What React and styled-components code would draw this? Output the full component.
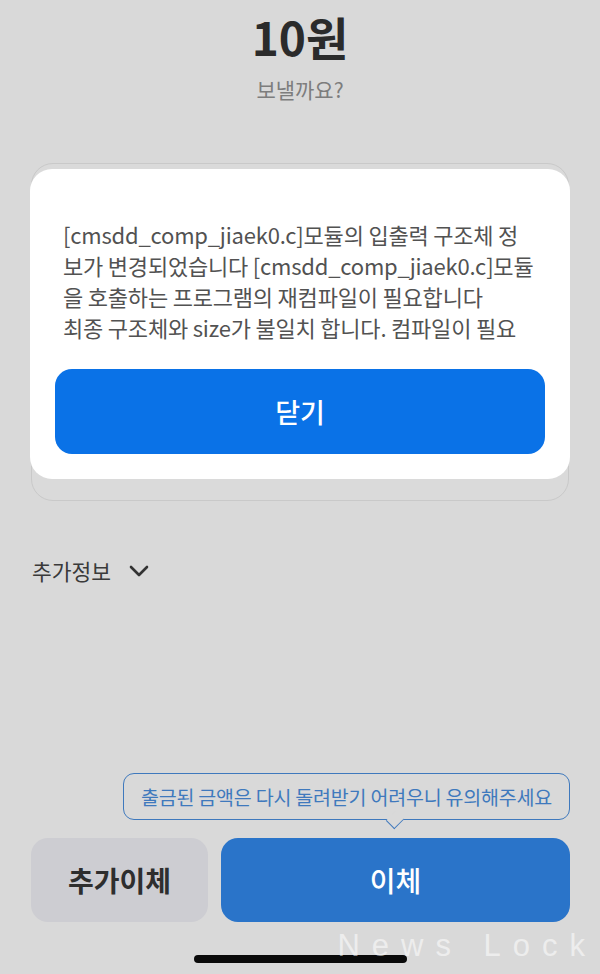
import React from 'react';
import styled, { createGlobalStyle } from 'styled-components';

const GlobalStyle = createGlobalStyle`
  html, body {
    margin: 0;
    padding: 0;
    background: #d9d9d9;
  }
  * { box-sizing: border-box; }
`;

const KR = `"Noto Sans CJK KR", "Noto Sans", sans-serif`;

const Screen = styled.div`
  position: relative;
  height: 974px;
  width: 600px;
  display: flex;
  flex-direction: column;
  padding: 0 30px;
  font-family: ${KR};
  overflow: hidden;
`;

const Header = styled.div`
  display: flex;
  flex-direction: column;
  align-items: center;
  padding-top: 8px;
`;

const Amount = styled.div`
  font-size: 46px;
  font-weight: 700;
  color: #2b2b2b;
  line-height: 56px;
  letter-spacing: 0;
`;

const Question = styled.div`
  margin-top: 10px;
  font-size: 21px;
  color: #7d7d7d;
  line-height: 30px;
`;

const BehindCard = styled.div`
  margin: 59px 1px 0 1px;
  height: 338px;
  border: 1px solid #c9c9c9;
  border-radius: 22px;
  background: #dadada;
`;

const InfoRow = styled.div`
  margin-top: 55px;
  display: flex;
  align-items: center;
  gap: 18px;
  padding-left: 2px;
  font-size: 21.5px;
  color: #3a3a3a;
  line-height: 30px;
`;

const Bottom = styled.div`
  margin-top: auto;
  display: flex;
  flex-direction: column;
`;

const Tooltip = styled.div`
  position: relative;
  align-self: flex-end;
  width: 447px;
  height: 47px;
  border: 1.5px solid #3f79bd;
  border-radius: 11px;
  display: flex;
  align-items: center;
  justify-content: center;
  font-size: 19.5px;
  color: #3f79bd;
  letter-spacing: -0.2px;

  &::after {
    content: '';
    position: absolute;
    left: 264px;
    bottom: -8px;
    width: 13px;
    height: 13px;
    background: #d9d9d9;
    border-right: 1.5px solid #3f79bd;
    border-bottom: 1.5px solid #3f79bd;
    transform: rotate(45deg) scaleX(0.85);
  }
`;

const ButtonRow = styled.div`
  margin-top: 18px;
  display: flex;
  gap: 13px;
  height: 84px;
  padding-left: 1px;
`;

const ActionButton = styled.button`
  flex: ${p => (p.$primary ? '1' : '0 0 177px')};
  border: none;
  border-radius: 17px;
  background: ${p => (p.$primary ? '#2a74c9' : '#cdcdd2')};
  color: ${p => (p.$primary ? '#ffffff' : '#2e2e2e')};
  font-family: ${KR};
  font-size: 28px;
  font-weight: ${p => (p.$primary ? 500 : 700)};
`;

const HomeArea = styled.div`
  height: 52px;
  display: flex;
  justify-content: center;
  padding-top: 33px;
`;

const HomeBar = styled.div`
  width: 213px;
  height: 8px;
  border-radius: 4px;
  background: #0a0a0a;
`;

const Watermark = styled.div`
  position: absolute;
  right: 3px;
  bottom: 10px;
  font-family: "Liberation Sans", Arial, sans-serif;
  font-size: 31px;
  letter-spacing: 12px;
  color: rgba(255, 255, 255, 0.55);
  white-space: nowrap;
`;

const Modal = styled.div`
  position: absolute;
  top: 169px;
  left: 30px;
  width: 540px;
  height: 310px;
  background: #ffffff;
  border-radius: 22px;
  padding: 50px 25px 0 25px;
  display: flex;
  flex-direction: column;
`;

const Message = styled.div`
  padding-left: 8px;
  font-size: 22px;
  line-height: 31px;
  color: #525252;
  letter-spacing: -0.2px;
`;

const Line = styled.div`
  white-space: nowrap;
`;

const CloseButton = styled.button`
  margin-top: 26px;
  height: 85px;
  border: none;
  border-radius: 17px;
  background: #0a72e7;
  color: #ffffff;
  font-family: ${KR};
  font-size: 27px;
  font-weight: 500;
`;

const Chevron = () => (
  <svg width="20" height="14" viewBox="0 0 20 14">
    <polyline points="2,3 10,11 18,3" fill="none" stroke="#333" strokeWidth="2.6" strokeLinecap="round" strokeLinejoin="round" />
  </svg>
);

const lines = [
  '[cmsdd_comp_jiaek0.c]모듈의 입출력 구조체 정',
  '보가 변경되었습니다 [cmsdd_comp_jiaek0.c]모듈',
  '을 호출하는 프로그램의 재컴파일이 필요합니다',
  '최종 구조체와 size가 불일치 합니다. 컴파일이 필요',
];

export default function App() {
  return (
    <>
      <GlobalStyle />
      <Screen>
        <Header>
          <Amount>10원</Amount>
          <Question>보낼까요?</Question>
        </Header>
        <BehindCard />
        <InfoRow>
          추가정보
          <Chevron />
        </InfoRow>
        <Bottom>
          <Tooltip>출금된 금액은 다시 돌려받기 어려우니 유의해주세요</Tooltip>
          <ButtonRow>
            <ActionButton>추가이체</ActionButton>
            <ActionButton $primary>이체</ActionButton>
          </ButtonRow>
          <HomeArea>
            <HomeBar />
          </HomeArea>
        </Bottom>
        <Watermark>News Lock</Watermark>
        <Modal>
          <Message>
            {lines.map(l => (
              <Line key={l}>{l}</Line>
            ))}
          </Message>
          <CloseButton>닫기</CloseButton>
        </Modal>
      </Screen>
    </>
  );
}
